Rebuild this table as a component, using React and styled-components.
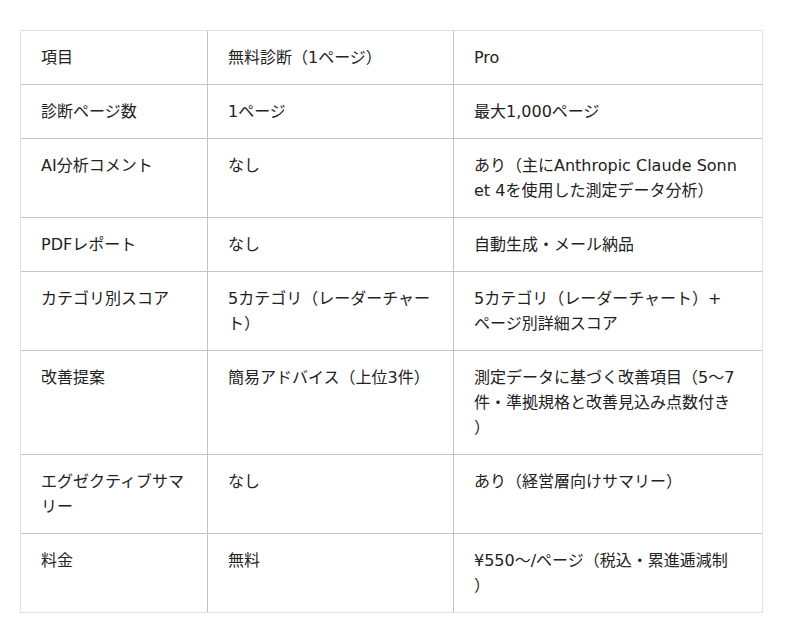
import React from "react";
import styled, { createGlobalStyle } from "styled-components";

const GlobalStyle = createGlobalStyle`
  body {
    margin: 0;
    background: #fff;
    color: #222;
  }
`;

const Page = styled.div`
  padding: 30px 20px;
`;

const Table = styled.div`
  display: grid;
  grid-template-columns: 187px 246px 308px;
  width: max-content;
  border: 1px solid #e2e2e2;
`;

const Cell = styled.div`
  padding: 14px ${(p) => (p.$lastCol ? "25px" : "20px")} 14px 20px;
  font-family: "DejaVu Sans", "Noto Sans CJK JP", sans-serif;
  font-size: 16px;
  line-height: 25px;
  word-break: break-all;
  line-break: anywhere;
  text-spacing-trim: space-all;
  border-right: ${(p) => (p.$lastCol ? "none" : "1px solid #c4c4c4")};
  border-bottom: ${(p) => (p.$lastRow ? "none" : "1px solid #c4c4c4")};
`;

const rows = [
  ["項目", "無料診断（1ページ）", "Pro"],
  ["診断ページ数", "1ページ", "最大1,000ページ"],
  ["AI分析コメント", "なし", "あり（主にAnthropic Claude Sonnet 4を使用した測定データ分析）"],
  ["PDFレポート", "なし", "自動生成・メール納品"],
  ["カテゴリ別スコア", "5カテゴリ（レーダーチャート）", "5カテゴリ（レーダーチャート）+ページ別詳細スコア"],
  ["改善提案", "簡易アドバイス（上位3件）", "測定データに基づく改善項目（5〜7件・準拠規格と改善見込み点数付き）"],
  ["エグゼクティブサマリー", "なし", "あり（経営層向けサマリー）"],
  ["料金", "無料", "¥550〜/ページ（税込・累進逓減制）"],
];

const App = () => {
  return (
    <Page>
      <GlobalStyle />
      <Table>
        {rows.map((row, i) =>
          row.map((text, j) => (
            <Cell
              key={i + "-" + j}
              $lastCol={j === row.length - 1}
              $lastRow={i === rows.length - 1}
            >
              {text}
            </Cell>
          ))
        )}
      </Table>
    </Page>
  );
};

export default App;
